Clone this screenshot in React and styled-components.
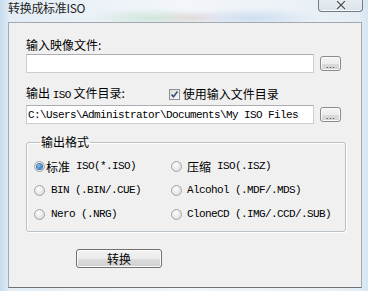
import React from 'react';
import styled, { createGlobalStyle } from 'styled-components';

const GlobalStyle = createGlobalStyle`
  html, body { margin: 0; padding: 0; }
  body {
    width: 368px;
    height: 291px;
    overflow: hidden;
    font-family: "Noto Sans CJK SC", "Liberation Sans", sans-serif;
  }
`;

const Window = styled.div`
  width: 368px;
  height: 291px;
  display: flex;
  flex-direction: column;
  background:
    radial-gradient(ellipse 60px 10px at 150px 18px, rgba(120, 190, 140, 0.25), transparent),
    radial-gradient(ellipse 40px 8px at 190px 18px, rgba(220, 140, 140, 0.2), transparent),
    radial-gradient(ellipse 70px 10px at 250px 18px, rgba(110, 160, 220, 0.25), transparent),
    linear-gradient(to right, #c6dcee 0px, #e3edf5 10px, #f3f6f9 50%, #e6eef5 97%, #d4e6f3 100%);
`;

const TitleBar = styled.div`
  height: 22px;
  display: flex;
  justify-content: space-between;
  align-items: flex-start;
  padding: 0 5px 0 8px;
`;

const Title = styled.span`
  font-size: 12px;
  line-height: 16px;
  color: #1e1e1e;
  letter-spacing: -0.3px;
`;

const CloseButton = styled.div`
  width: 45px;
  height: 12px;
  box-sizing: border-box;
  border: 1px solid #6f7a85;
  border-top: none;
  border-radius: 0 0 4px 4px;
  background: linear-gradient(#e6ecf1, #dbe3ea);
  box-shadow: inset 0 -1px 0 #f8fbfd;
  display: flex;
  justify-content: center;
  align-items: flex-end;
  padding-bottom: 1px;
`;

const Client = styled.div`
  flex: 1;
  margin: 0 6px 3px 8px;
  border: 1px solid #a2a9b0;
  border-bottom-color: #6d7276;
  background: #f0f0f0;
  padding: 15px 0 0 17px;
  display: flex;
  flex-direction: column;
  align-items: flex-start;
`;

const Label = styled.div`
  font-size: 12px;
  line-height: 14px;
  color: #000;
`;

const Mono = styled.span`
  font-family: "Liberation Mono", monospace;
  font-size: 11px;
  letter-spacing: -0.6px;
`;

const Row = styled.div`
  display: flex;
  align-items: center;
  margin-top: ${p => p.$top || 0}px;
`;

const TextBox = styled.div`
  width: 288px;
  height: 19px;
  box-sizing: border-box;
  background: #fff;
  border: 1px solid #c9ccd1;
  border-top-color: #abadb3;
  display: flex;
  align-items: center;
  padding-left: 1px;
  font-family: "Liberation Mono", monospace;
  font-size: 11px;
  letter-spacing: -0.6px;
  color: #000;
  white-space: pre;
`;

const BrowseButton = styled.div`
  width: 21px;
  height: 15px;
  margin-left: 6px;
  box-sizing: border-box;
  border: 1px solid #8a8a8a;
  border-radius: 3px;
  background: linear-gradient(#f4f4f4 0%, #ececec 50%, #dcdcdc 51%, #d2d2d2 100%);
  box-shadow: inset 0 0 0 1px #fbfbfb;
  display: flex;
  justify-content: center;
  align-items: flex-end;
  font-family: "Liberation Sans", sans-serif;
  font-size: 9px;
  line-height: 10px;
  letter-spacing: 0.5px;
  color: #222;
`;

const CheckLabel = styled.label`
  display: flex;
  align-items: center;
  margin-left: 44px;
  font-size: 12px;
  line-height: 14px;
`;

const CheckBox = styled.span`
  width: 11px;
  height: 11px;
  box-sizing: border-box;
  border: 1px solid #8e8f8f;
  background: linear-gradient(135deg, #dcdcdc, #fbfbfb);
  margin-right: 3px;
  display: flex;
  align-items: center;
  justify-content: center;
`;

const Group = styled.fieldset`
  width: 320px;
  box-sizing: border-box;
  margin: 11px 0 0 0;
  padding: 5px 0 5px 7px;
  border: 1px solid #b9c0c6;
  border-radius: 3px;
  box-shadow: inset 1px 1px 0 #fff, 1px 1px 0 #fff;
  display: grid;
  grid-template-columns: 137px 1fr;
  grid-auto-rows: 24px;
`;

const Legend = styled.legend`
  font-size: 12px;
  line-height: 14px;
  padding: 0 1px;
  margin-left: 6px;
`;

const RadioItem = styled.div`
  display: flex;
  align-items: center;
  font-family: "Liberation Mono", monospace;
  font-size: 11px;
  letter-spacing: -0.6px;
  color: #000;
  white-space: pre;
`;

const RadioDot = styled.span`
  width: 11px;
  height: 11px;
  box-sizing: border-box;
  border-radius: 50%;
  border: 1px solid #a4a4a4;
  background: radial-gradient(circle at 40% 35%, #fdfdfd, #d6d6d6);
  margin-right: ${p => p.$gap}px;
  display: flex;
  align-items: center;
  justify-content: center;
  &::after {
    content: "";
    display: ${p => (p.$on ? 'block' : 'none')};
    width: 5px;
    height: 5px;
    border-radius: 50%;
    background: radial-gradient(circle at 35% 35%, #8ac1f0, #1b5fa8);
    box-shadow: 0 0 0 1px #3b78b8;
  }
`;

const Cjk = styled.span`
  font-family: "Noto Sans CJK SC", sans-serif;
  font-size: 12px;
  letter-spacing: 0;
`;

const ActionButton = styled.div`
  width: 86px;
  height: 19px;
  margin: 17px 0 0 50px;
  box-sizing: border-box;
  border: 1px solid #707070;
  border-radius: 3px;
  background: linear-gradient(#f2f2f2 0%, #ebebeb 50%, #dddddd 51%, #cfcfcf 100%);
  box-shadow: inset 0 0 0 1px #fbfbfb;
  display: flex;
  align-items: center;
  justify-content: center;
  font-size: 12px;
  color: #000;
`;

const formats = [
  { cn: '标准', rest: ' ISO(*.ISO)', on: true, gap: 1 },
  { cn: '压缩', rest: ' ISO(.ISZ)', gap: 5 },
  { rest: 'BIN (.BIN/.CUE)', gap: 6 },
  { rest: 'Alcohol (.MDF/.MDS)', gap: 5 },
  { rest: 'Nero (.NRG)', gap: 6 },
  { rest: 'CloneCD (.IMG/.CCD/.SUB)', gap: 5 },
];

export default function App() {
  return (
    <>
      <GlobalStyle />
      <Window>
        <TitleBar>
          <Title>转换成标准ISO</Title>
          <CloseButton>
            <svg width="12" height="9" viewBox="0 0 12 9">
              <path d="M2 0 L10 8 M10 0 L2 8" stroke="#fff" strokeWidth="3" />
              <path d="M2 0 L10 8 M10 0 L2 8" stroke="#4a4f55" strokeWidth="1.3" />
            </svg>
          </CloseButton>
        </TitleBar>
        <Client>
          <Label>输入映像文件:</Label>
          <Row $top={2}>
            <TextBox />
            <BrowseButton>...</BrowseButton>
          </Row>
          <Row $top={13}>
            <Label>输出 <Mono>ISO</Mono> 文件目录:</Label>
            <CheckLabel>
              <CheckBox>
                <svg width="9" height="9" viewBox="0 0 9 9">
                  <path d="M1.5 4.5 L3.5 6.8 L7.5 1.5" stroke="#3d4f73" strokeWidth="1.6" fill="none" />
                </svg>
              </CheckBox>
              使用输入文件目录
            </CheckLabel>
          </Row>
          <Row $top={3}>
            <TextBox>{'C:\\Users\\Administrator\\Documents\\My ISO Files'}</TextBox>
            <BrowseButton>...</BrowseButton>
          </Row>
          <Group>
            <Legend>输出格式</Legend>
            {formats.map((f, i) => (
              <RadioItem key={i}>
                <RadioDot $on={f.on} $gap={f.gap} />
                {f.cn && <Cjk>{f.cn}</Cjk>}
                {f.rest}
              </RadioItem>
            ))}
          </Group>
          <ActionButton>转换</ActionButton>
        </Client>
      </Window>
    </>
  );
}
